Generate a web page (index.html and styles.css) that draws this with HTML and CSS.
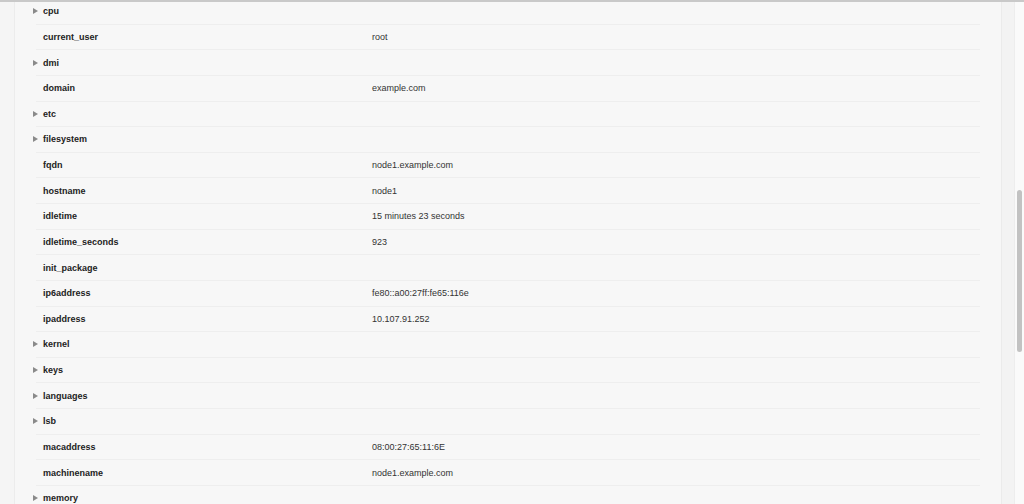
FILE: index.html
```html
<!DOCTYPE html>
<html>
<head>
<meta charset="utf-8">
<link rel="stylesheet" href="styles.css">
</head>
<body>
<div class="topline"></div>
<div class="frame">
  <div class="gutter"></div>
  <div class="panel">
    <ul class="facts">
      <li class="row"><span class="key"><span class="tri"></span>cpu</span><span class="val"></span></li>
      <li class="row"><span class="key">current_user</span><span class="val">root</span></li>
      <li class="row"><span class="key"><span class="tri"></span>dmi</span><span class="val"></span></li>
      <li class="row"><span class="key">domain</span><span class="val">example.com</span></li>
      <li class="row"><span class="key"><span class="tri"></span>etc</span><span class="val"></span></li>
      <li class="row"><span class="key"><span class="tri"></span>filesystem</span><span class="val"></span></li>
      <li class="row"><span class="key">fqdn</span><span class="val">node1.example.com</span></li>
      <li class="row"><span class="key">hostname</span><span class="val">node1</span></li>
      <li class="row"><span class="key">idletime</span><span class="val">15 minutes 23 seconds</span></li>
      <li class="row"><span class="key">idletime_seconds</span><span class="val">923</span></li>
      <li class="row"><span class="key">init_package</span><span class="val"></span></li>
      <li class="row"><span class="key">ip6address</span><span class="val">fe80::a00:27ff:fe65:116e</span></li>
      <li class="row"><span class="key">ipaddress</span><span class="val">10.107.91.252</span></li>
      <li class="row"><span class="key"><span class="tri"></span>kernel</span><span class="val"></span></li>
      <li class="row"><span class="key"><span class="tri"></span>keys</span><span class="val"></span></li>
      <li class="row"><span class="key"><span class="tri"></span>languages</span><span class="val"></span></li>
      <li class="row"><span class="key"><span class="tri"></span>lsb</span><span class="val"></span></li>
      <li class="row"><span class="key">macaddress</span><span class="val">08:00:27:65:11:6E</span></li>
      <li class="row"><span class="key">machinename</span><span class="val">node1.example.com</span></li>
      <li class="row"><span class="key"><span class="tri"></span>memory</span><span class="val"></span></li>
    </ul>
  </div>
  <div class="rgutter"></div>
  <div class="scrollbar"><div class="thumb"></div></div>
</div>
</body>
</html>
```

FILE: styles.css
```css
html, body {
  margin: 0;
  padding: 0;
  height: 100%;
  overflow: hidden;
}
body {
  background: #f7f7f7;
  font-family: "Liberation Sans", Arial, sans-serif;
  color: #222;
  display: flex;
  flex-direction: column;
}
.topline {
  height: 2px;
  background: #c9c9c9;
  flex: none;
}
.frame {
  flex: 1;
  display: flex;
  min-height: 0;
}
.gutter {
  width: 14px;
  background: #f5f5f5;
  border-right: 1px solid #ececec;
  flex: none;
}
.panel {
  flex: 1;
  background: #f7f7f7;
  overflow: hidden;
}
.facts {
  list-style: none;
  margin: -3px 0 0 0;
  padding: 0 21px 0 21px;
}
.row {
  display: flex;
  align-items: center;
  height: 24.63px;
  border-bottom: 1px solid #eeeeee;
  font-size: 9px;
}
.key {
  position: relative;
  width: 329px;
  padding-left: 7px;
  font-weight: bold;
  color: #222;
  flex: none;
}
.tri {
  position: absolute;
  left: -3px;
  top: 2px;
  width: 0;
  height: 0;
  border-top: 3px solid transparent;
  border-bottom: 3px solid transparent;
  border-left: 5px solid #8a8a8a;
}
.val {
  color: #333;
}
.rgutter {
  width: 12px;
  background: #f3f3f3;
  border-left: 1px solid #ebebeb;
  flex: none;
}
.scrollbar {
  width: 9px;
  background: #fafafa;
  border-left: 1px solid #ededed;
  flex: none;
  position: relative;
}
.thumb {
  position: absolute;
  left: 2px;
  width: 5px;
  top: 188px;
  height: 162px;
  border-radius: 3px;
  background: #c2c2c2;
}
```
